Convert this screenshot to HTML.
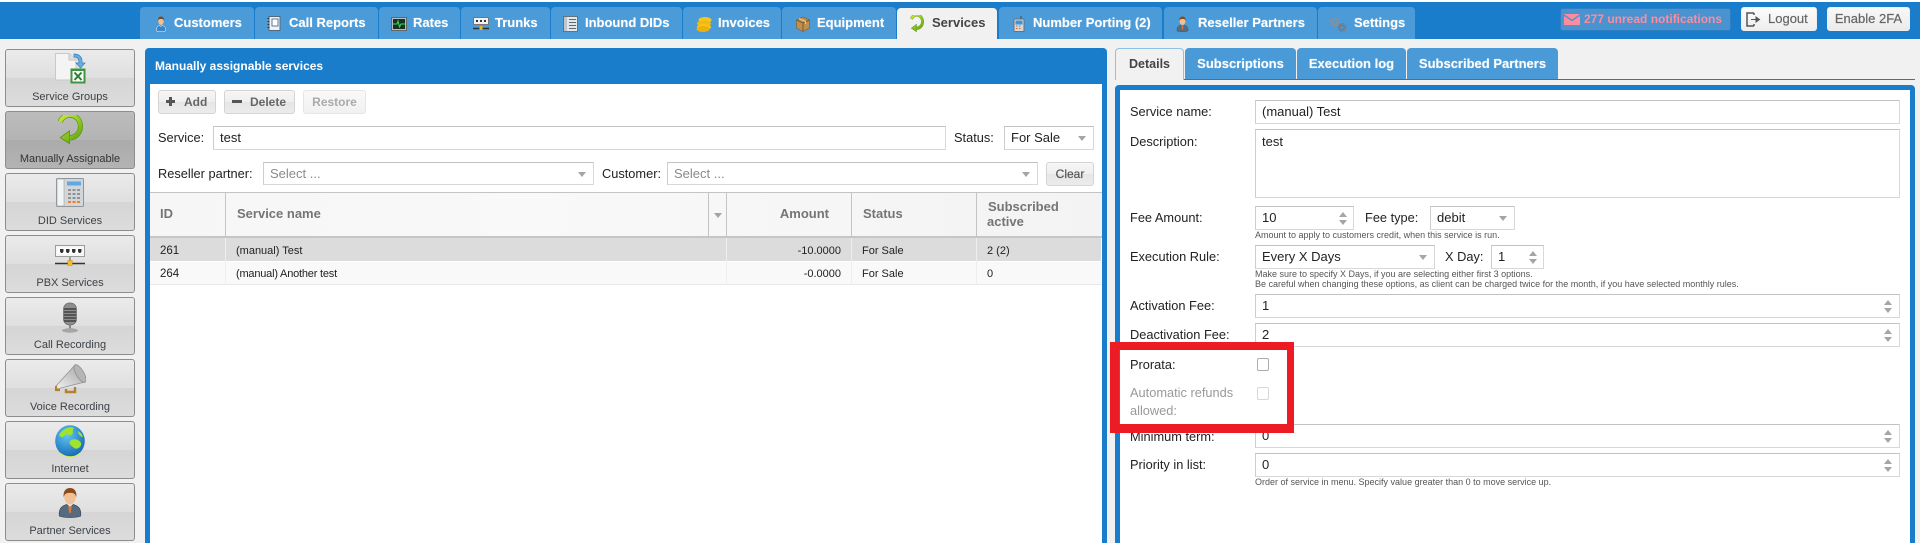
<!DOCTYPE html>
<html><head><meta charset="utf-8"><title>Services</title>
<style>
*{box-sizing:border-box}
html,body{margin:0;padding:0}
body{width:1920px;height:543px;overflow:hidden;background:#f1f1f1;position:relative;font-family:"Liberation Sans",Arial,sans-serif;font-size:12px;color:#222}
.a,.t,.tab,.sb,.inp,.btn,.rt,svg.i{position:absolute}
.t{white-space:nowrap;line-height:16px;height:16px}
.rt{background:#4a9ad8;border-radius:4px 4px 0 0;color:#fff;font-weight:bold;font-size:13px;line-height:32px;white-space:nowrap;text-shadow:0 0 1px rgba(255,255,255,.5)}
.tab{top:7px;height:32px;background:#4b9bd9;border-radius:4px 4px 0 0;color:#fff;font-weight:bold;font-size:13px;line-height:32px;white-space:nowrap;text-shadow:0 0 1px rgba(255,255,255,.5)}
.tab span{position:absolute;top:0}
.sb{left:5px;width:130px;height:58px;border:1px solid #8d8d8d;border-radius:3px;background:linear-gradient(#ebebeb 0,#dfdfdf 50%,#d5d5d5 50%,#dcdcdc 100%);text-align:center;font-size:11px;color:#3c4146;line-height:14px;padding-top:40px}
.sb.on{background:linear-gradient(#bcbcbc 0,#b4b4b4 50%,#ababab 50%,#b3b3b3 100%);color:#333}
.inp{border:1px solid #d8d8d8;border-top-color:#c2c2c2;border-left-color:#cdcdcd;background:#fff;line-height:22px;padding-left:6px;font-size:13px;color:#222;white-space:nowrap}
.btn{border:1px solid #d4d4d4;border-radius:3px;background:linear-gradient(#f6f6f6 0,#efefef 50%,#e5e5e5 50%,#ececec 100%);font-weight:bold;color:#666;font-size:12px;line-height:22px;text-align:center;white-space:nowrap}
.tr{width:0;height:0;position:absolute;border-left:4px solid transparent;border-right:4px solid transparent}
.dn{border-top:5px solid #a5a5a5}
.up{border-bottom:5px solid #a5a5a5}
.th{font-weight:bold;color:#757575;font-size:13px}
.c{font-size:11px;color:#222}
.h{font-size:9px;color:#555}
.l{font-size:12.800px;color:#222}
</style></head><body>
<svg width="0" height="0" style="position:absolute">
<defs>
<linearGradient id="gr" gradientUnits="userSpaceOnUse" x1="4" y1="2" x2="28" y2="30"><stop offset="0" stop-color="#c8e63c"/><stop offset="1" stop-color="#5aa510"/></linearGradient>
<radialGradient id="gl" cx=".4" cy=".3" r=".8"><stop offset="0" stop-color="#63c8f4"/><stop offset="1" stop-color="#0c5fae"/></radialGradient>
<linearGradient id="mg" x1="0" y1="1" x2="1" y2="0"><stop offset="0" stop-color="#f2f2f2"/><stop offset="1" stop-color="#a0a0a0"/></linearGradient>
<symbol id="arrow" viewBox="0 0 32 32"><path d="M5 7.500A12.500 12.500 0 1 1 16 25" fill="none" stroke="#5c950f" stroke-width="6"/><path d="M16 17.500L5 25L16 31.500Z" fill="url(#gr)" stroke="#5c950f" stroke-width="1"/><path d="M5 7.500A12.500 12.500 0 1 1 16 25" fill="none" stroke="url(#gr)" stroke-width="4.500"/></symbol>
<symbol id="person" viewBox="0 0 24 32"><path d="M1 30C0 22 4 19.500 8.500 18L12 21L15.500 18C20 19.500 24 22 23 30C18 32 6 32 1 30Z" fill="#566b80" stroke="#3c4a58" stroke-width=".7"/><path d="M10 19L12 21L14 19L12.800 27H11.200Z" fill="#e8762d"/><ellipse cx="12" cy="10" rx="6" ry="8" fill="#efc197"/><path d="M5.500 11C4.500 4 8 1 12 1C16 1 19.500 4 18.500 11C18 6.500 15 6 12 6C9 6 6 6.500 5.500 11Z" fill="#8c4c1a"/></symbol>
<symbol id="cust" viewBox="0 0 24 32"><path d="M3 30C2 23 5 20 9 19L12 21L15 19C19 20 22 23 21 30C17 32 7 32 3 30Z" fill="#3d85c7" stroke="#fff" stroke-width="1"/><ellipse cx="12" cy="10" rx="5.500" ry="8" fill="#efc197"/><path d="M6 11C5 4 8 1 12 1C16 1 19 4 18 11C18 6.500 15 6 12 6C9 6 6 6.500 6 11Z" fill="#7e4a1c"/></symbol>
</defs></svg>

<div class="a" style="left:0;top:0;width:1920px;height:2px;background:#fff"></div>
<div class="a" style="left:0;top:2px;width:1920px;height:37px;background:#197dcb"></div>

<!-- top tabs -->
<div class="tab" style="left:140px;width:114px"><svg class="i" style="left:15px;top:9px" width="12" height="16" viewBox="0 0 24 32"><use href="#cust"/></svg><span style="left:34px">Customers</span></div>
<div class="tab" style="left:255px;width:123px"><svg class="i" style="left:12px;top:9px" width="14" height="15" viewBox="0 0 14 15"><rect x="2" y=".5" width="11" height="14" fill="#eef3f7" stroke="#55687a"/><rect x="5" y="3" width="6" height="7" fill="#fff" stroke="#5c7b96"/><path d="M.5 2.500h2M.5 5.500h2M.5 8.500h2M.5 11.500h2" stroke="#333"/></svg><span style="left:34px">Call Reports</span></div>
<div class="tab" style="left:379px;width:81px"><svg class="i" style="left:12px;top:10px" width="16" height="14" viewBox="0 0 16 14"><rect x=".5" y=".5" width="15" height="13" fill="#b9bdc0" stroke="#666"/><rect x="2" y="2" width="12" height="10" fill="#143325"/><path d="M2 7H6L7 4L8.500 10L10 7H14" stroke="#3fdc5a" fill="none"/></svg><span style="left:34px">Rates</span></div>
<div class="tab" style="left:461px;width:89px"><svg class="i" style="left:12px;top:10px" width="16" height="14" viewBox="0 0 16 14"><rect x=".5" y=".5" width="15" height="7" fill="#f2f2f2" stroke="#777"/><path d="M3 3h2v2H3zM7 3h2v2H7zM11 3h2v2h-2z" fill="#333"/><path d="M0 11.500H16" stroke="#333" stroke-width="1.500"/><rect x="6.500" y="9" width="3" height="4" fill="#e8b32e"/></svg><span style="left:34px">Trunks</span></div>
<div class="tab" style="left:551px;width:131px"><svg class="i" style="left:12px;top:9px" width="15" height="16" viewBox="0 0 15 16"><rect x=".5" y=".5" width="14" height="15" fill="#e4e7e9" stroke="#66727c"/><rect x="1" y="1" width="3" height="14" fill="#bfc5ca"/><path d="M6 3.500h7M6 6.500h7M6 9.500h7M6 12.500h7" stroke="#5f6a72"/></svg><span style="left:34px">Inbound DIDs</span></div>
<div class="tab" style="left:683px;width:98px"><svg class="i" style="left:13px;top:10px" width="16" height="15" viewBox="0 0 16 15"><ellipse cx="9" cy="3" rx="6.500" ry="3" fill="#f7c521"/><ellipse cx="8" cy="6.500" rx="7" ry="3" fill="#f2b90f"/><ellipse cx="8" cy="10" rx="7" ry="3" fill="#f7c521"/><ellipse cx="7" cy="12" rx="6.500" ry="3" fill="#edb00c"/></svg><span style="left:35px">Invoices</span></div>
<div class="tab" style="left:782px;width:114px"><svg class="i" style="left:14px;top:9px" width="14" height="16" viewBox="0 0 14 16"><path d="M7 1L13.500 4V12L7 15.500L.5 12V4Z" fill="#c08f50" stroke="#8a6230" stroke-width=".7"/><path d="M.5 4L7 7L13.500 4M7 7V15.500" stroke="#7d5828" fill="none"/><path d="M3 2.500L9.500 5.500V8" stroke="#e8cf9d" fill="none"/></svg><span style="left:35px">Equipment</span></div>
<div class="tab" style="left:897px;width:100px;top:8px;height:31px;background:#f1f1f1;color:#444;text-shadow:none;line-height:30px"><svg class="i" style="left:12px;top:7px" width="15" height="17" viewBox="0 0 32 32" preserveAspectRatio="none"><use href="#arrow"/></svg><span style="left:35px">Services</span></div>
<div class="tab" style="left:999px;width:163px"><svg class="i" style="left:14px;top:9px" width="12" height="16" viewBox="0 0 12 16"><rect x="1" y="3" width="10" height="12.500" rx="1" fill="#d4d8db" stroke="#6b7276"/><path d="M8 0V3" stroke="#555" stroke-width="1.200"/><rect x="2.500" y="4.500" width="7" height="4" fill="#3f93d6"/><path d="M3 10h1.500M6 10h1.500M3 12.500h1.500M6 12.500h1.500" stroke="#d6662b"/></svg><span style="left:34px">Number Porting (2)</span></div>
<div class="tab" style="left:1164px;width:153px"><svg class="i" style="left:12px;top:9px" width="13" height="16" viewBox="0 0 24 32"><use href="#person"/></svg><span style="left:34px">Reseller Partners</span></div>
<div class="tab" style="left:1318px;width:97px"><svg class="i" style="left:12px;top:10px" width="17" height="15" viewBox="0 0 17 15"><circle cx="5" cy="5" r="4.200" fill="none" stroke="#8a9096" stroke-width="1.600" stroke-dasharray="1.700 1.600"/><circle cx="5" cy="5" r="2.500" fill="none" stroke="#8a9096" stroke-width="1.600"/><circle cx="12" cy="10.500" r="3.800" fill="none" stroke="#75797e" stroke-width="1.600" stroke-dasharray="1.600 1.400"/><circle cx="12" cy="10.500" r="2.200" fill="none" stroke="#75797e" stroke-width="1.500"/></svg><span style="left:36px">Settings</span></div>

<!-- notifications -->
<div class="a" style="left:1560px;top:8px;width:171px;height:23px;background:#4a93d1;border:1px solid #2e80c5;border-radius:3px;color:#ff8b9c;font-weight:bold;font-size:12px;line-height:21px;white-space:nowrap;padding-left:23px">277 unread notifications</div>
<svg class="i" style="left:1564px;top:14px" width="16" height="11" viewBox="0 0 16 11"><rect width="16" height="11" fill="#ff8b9c"/><path d="M0 1L8 6.500L16 1" stroke="#4a93d1" stroke-width="1.400" fill="none"/></svg>
<div class="btn" style="left:1741px;top:7px;width:76px;height:24px;border-color:#eee;background:linear-gradient(#fcfcfc,#eee);padding-left:26px;text-align:left;color:#666;font-weight:normal;font-size:13px;-webkit-text-stroke:.2px #666">Logout</div>
<svg class="i" style="left:1746px;top:12px" width="15" height="15" viewBox="0 0 15 15"><path d="M8 1H1V14H8M8 1V3M8 14V12" stroke="#555" stroke-width="1.500" fill="none"/><path d="M5 7.500H10M10 5L13.500 7.500L10 10Z" stroke="#555" fill="#555"/></svg>
<div class="btn" style="left:1827px;top:7px;width:83px;height:24px;border-color:#eee;background:linear-gradient(#f8f8f8,#ebebeb);color:#666;font-weight:normal;font-size:13px;-webkit-text-stroke:.2px #666">Enable 2FA</div>

<!-- sidebar -->
<div class="sb" style="top:49px">Service Groups</div>
<div class="sb on" style="top:111px">Manually Assignable</div>
<div class="sb" style="top:173px">DID Services</div>
<div class="sb" style="top:235px">PBX Services</div>
<div class="sb" style="top:297px">Call Recording</div>
<div class="sb" style="top:359px">Voice Recording</div>
<div class="sb" style="top:421px">Internet</div>
<div class="sb" style="top:483px">Partner Services</div>

<svg class="i" style="left:55px;top:53px" width="31" height="31" viewBox="0 0 31 31"><path d="M.5 .5H14L21 7V27H.5Z" fill="#f4f4f4" stroke="#c9c9c9"/><path d="M14 .5V7H21" fill="#dedede" stroke="#c4c4c4"/><path d="M19 1C24 1 27 4 27 8V10H30L25.500 15L21 10H24C24 6 22 4 19 4Z" fill="#6aaee0" stroke="#2f7fbe" stroke-width=".7"/><rect x="15.500" y="15.500" width="15" height="15" fill="#3f9440"/><rect x="17.500" y="18" width="11" height="10.500" fill="#fff"/><path d="M19.500 19.500L26.500 27M26.500 19.500L19.500 27" stroke="#2c7d2e" stroke-width="2"/></svg>
<svg class="i" style="left:56px;top:115px" width="27" height="29" viewBox="0 0 32 32" preserveAspectRatio="none"><use href="#arrow"/></svg>
<svg class="i" style="left:56px;top:178px" width="28" height="29" viewBox="0 0 28 29"><rect x=".5" y=".5" width="27" height="28" rx="1" fill="#d2d6d8" stroke="#8f9598"/><rect x="1" y="1" width="7" height="27" fill="#f2f3f3" stroke="#9ba0a3" stroke-width=".6"/><rect x="11" y="3.500" width="14" height="4" fill="#5fa8e4"/><g fill="#8d9499"><rect x="12" y="11" width="3" height="2"/><rect x="16.500" y="11" width="3" height="2"/><rect x="21" y="11" width="3" height="2"/><rect x="12" y="15" width="3" height="2"/><rect x="16.500" y="15" width="3" height="2"/><rect x="21" y="15" width="3" height="2"/><rect x="12" y="19" width="3" height="2"/><rect x="16.500" y="19" width="3" height="2"/><rect x="21" y="19" width="3" height="2"/></g><g fill="#f07f27"><rect x="12" y="23" width="3" height="2"/><rect x="16.500" y="23" width="3" height="2"/><rect x="21" y="23" width="3" height="2"/></g></svg>
<svg class="i" style="left:55px;top:245px" width="30" height="21" viewBox="0 0 30 21"><rect x=".5" y=".5" width="29" height="11" fill="#f6f6f6" stroke="#9c9c9c"/><rect x="3" y="3" width="24" height="6" fill="#fff"/><path d="M5 4h3.500v2.500l-1 1.500h-1.500l-1-1.500zM11 4h3.500v2.500l-1 1.500h-1.500l-1-1.500zM17 4h3.500v2.500l-1 1.500h-1.500l-1-1.500zM23 4h3.500v2.500l-1 1.500h-1.500l-1-1.500z" fill="#333"/><path d="M0 18.500H30" stroke="#333" stroke-width="1.600"/><path d="M15 12V16" stroke="#555"/><rect x="12.800" y="15.500" width="4.400" height="5" fill="#f5bd21" stroke="#c48e0f" stroke-width=".5"/></svg>
<svg class="i" style="left:60px;top:302px" width="20" height="31" viewBox="0 0 20 31"><rect x="3.500" y="1" width="13" height="22" rx="6" fill="#8e8e8e" stroke="#666" stroke-width=".7"/><path d="M4 7H16M4 10H16M4 13H16M4 16H16M4 19H16" stroke="#333" stroke-width="1.200"/><path d="M10 23V27" stroke="#888" stroke-width="2"/><ellipse cx="10" cy="28.500" rx="8" ry="2.200" fill="#a5a5a5"/></svg>
<svg class="i" style="left:55px;top:364px" width="31" height="33" viewBox="0 0 31 33"><path d="M1 22L20 1L30 18L2 25Z" fill="url(#mg)" stroke="#8e8e8e" stroke-width=".7"/><ellipse cx="25" cy="9.500" rx="3.800" ry="10" transform="rotate(-30 25 9.500)" fill="#b5b5b5" stroke="#8a8a8a" stroke-width=".7"/><path d="M1 22V26L5 26" stroke="#b78128" stroke-width="2.200" fill="none"/><path d="M11 25V28H20V23" stroke="#b78128" stroke-width="2.400" fill="none"/></svg>
<svg class="i" style="left:55px;top:425px" width="30" height="32" viewBox="0 0 30 32"><ellipse cx="15" cy="16" rx="14.800" ry="15.800" fill="url(#gl)"/><path d="M4 10C8 3 16 1 19 3C16 6 20 8 16 10C14 11 13 8 10 10C8 12 7 14 4 10ZM15 16C18 13 24 14 26 18C27 22 22 25 19 23C17 21 13 19 15 16ZM23 6C25 7 27 9 28 12C26 12 23 10 23 6Z" fill="#9fe32d"/><path d="M5 28C11 33 20 33 25 28" stroke="#d4ef48" stroke-width="1" fill="none"/></svg>
<svg class="i" style="left:58px;top:487px" width="24" height="31" viewBox="0 0 24 32"><use href="#person"/></svg>

<!-- left panel -->
<div class="a" style="left:145px;top:48px;width:962px;height:495px;background:#197dcb;border-radius:4px 4px 0 0"></div>
<div class="a" style="left:150px;top:84px;width:952px;height:459px;background:#fff"></div>
<div class="t" style="left:155px;top:58px;color:#fff;font-weight:bold;font-size:12px">Manually assignable services</div>

<div class="btn" style="left:158px;top:90px;width:58px;height:24px;text-align:left;padding-left:25px">Add</div>
<div class="a" style="left:166px;top:100px;width:9px;height:3px;background:#555"></div>
<div class="a" style="left:169px;top:97px;width:3px;height:9px;background:#555"></div>
<div class="btn" style="left:224px;top:90px;width:71px;height:24px;text-align:left;padding-left:25px">Delete</div>
<div class="a" style="left:232px;top:100px;width:10px;height:3px;background:#555"></div>
<div class="btn" style="left:303px;top:90px;width:63px;height:24px;color:#aaa;border-color:#e6e6e6;background:linear-gradient(#f9f9f9,#f1f1f1)">Restore</div>

<div class="t l" style="left:158px;top:130px">Service:</div>
<div class="inp" style="left:213px;top:126px;width:733px;height:24px">test</div>
<div class="t l" style="left:954px;top:130px">Status:</div>
<div class="inp" style="left:1004px;top:126px;width:90px;height:24px">For Sale</div>
<div class="tr dn" style="left:1078px;top:136px"></div>

<div class="t l" style="left:158px;top:166px">Reseller partner:</div>
<div class="inp" style="left:263px;top:162px;width:331px;height:23px;color:#8a8a8a">Select ...</div>
<div class="tr dn" style="left:578px;top:172px"></div>
<div class="t l" style="left:602px;top:166px">Customer:</div>
<div class="inp" style="left:667px;top:162px;width:371px;height:23px;color:#8a8a8a">Select ...</div>
<div class="tr dn" style="left:1022px;top:172px"></div>
<div class="btn" style="left:1046px;top:162px;width:48px;height:24px;font-weight:normal;color:#555;-webkit-text-stroke:.2px #555">Clear</div>

<!-- table -->
<div class="a" style="left:150px;top:192px;width:952px;height:46px;background:linear-gradient(90deg,#f6f6f6,#f9f9f9 40%,#f3f3f3);border-top:1px solid #c4c4c4;border-bottom:2px solid #c6c6c6"></div>
<div class="a" style="left:225px;top:192px;width:1px;height:46px;background:#c4c4c4"></div>
<div class="a" style="left:708px;top:192px;width:1px;height:46px;background:#c4c4c4"></div>
<div class="a" style="left:726px;top:192px;width:1px;height:46px;background:#c4c4c4"></div>
<div class="a" style="left:851px;top:192px;width:1px;height:46px;background:#c4c4c4"></div>
<div class="a" style="left:976px;top:192px;width:1px;height:46px;background:#c4c4c4"></div>
<div class="t th" style="left:160px;top:206px">ID</div>
<div class="t th" style="left:237px;top:206px">Service name</div>
<div class="tr dn" style="left:714px;top:213px"></div>
<div class="t th" style="left:769px;top:206px;width:60px;text-align:right">Amount</div>
<div class="t th" style="left:863px;top:206px">Status</div>
<div class="t th" style="left:988px;top:199px">Subscribed</div>
<div class="t th" style="left:987px;top:214px">active</div>

<div class="a" style="left:150px;top:238px;width:951px;height:23px;background:#dcdcdc"></div>
<div class="a" style="left:150px;top:262px;width:952px;height:23px;background:#f9f9f9;border-bottom:1px solid #e8e8e8"></div>
<div class="a" style="left:225px;top:238px;width:1px;height:47px;background:#eee"></div>
<div class="a" style="left:726px;top:238px;width:1px;height:47px;background:#eee"></div>
<div class="a" style="left:851px;top:238px;width:1px;height:47px;background:#eee"></div>
<div class="a" style="left:976px;top:238px;width:1px;height:47px;background:#eee"></div>
<div class="t c" style="left:160px;top:243px;font-size:11.500px">261</div>
<div class="t c" style="left:236px;top:243px">(manual) Test</div>
<div class="t c" style="left:781px;top:243px;width:60px;text-align:right">-10.0000</div>
<div class="t c" style="left:862px;top:243px">For Sale</div>
<div class="t c" style="left:987px;top:243px">2 (2)</div>
<div class="t c" style="left:160px;top:266px;font-size:11.500px">264</div>
<div class="t c" style="left:236px;top:266px;letter-spacing:-.2px">(manual) Another test</div>
<div class="t c" style="left:781px;top:266px;width:60px;text-align:right">-0.0000</div>
<div class="t c" style="left:862px;top:266px">For Sale</div>
<div class="t c" style="left:987px;top:266px">0</div>

<!-- right tabs -->
<div class="a" style="left:1115px;top:79px;width:800px;height:1px;background:#197dcb"></div>
<div class="rt" style="left:1115px;top:48px;width:69px;height:32px;background:#f1f1f1;color:#444;text-shadow:none;border:1px solid #8fc0e6;border-bottom:0;text-align:center;line-height:31px;font-size:12.500px">Details</div>
<div class="rt" style="left:1185px;top:48px;width:111px;height:31px;text-align:center;line-height:31px">Subscriptions</div>
<div class="rt" style="left:1297px;top:48px;width:109px;height:31px;text-align:center;line-height:31px">Execution log</div>
<div class="rt" style="left:1407px;top:48px;width:151px;height:31px;text-align:center;line-height:31px">Subscribed Partners</div>

<!-- right panel -->
<div class="a" style="left:1115px;top:85px;width:800px;height:458px;background:#197dcb;border-radius:4px 4px 0 0"></div>
<div class="a" style="left:1120px;top:90px;width:790px;height:453px;background:#fff"></div>

<div class="t l" style="left:1130px;top:104px">Service name:</div>
<div class="inp" style="left:1255px;top:100px;width:645px;height:24px">(manual) Test</div>
<div class="t l" style="left:1130px;top:134px">Description:</div>
<div class="inp" style="left:1255px;top:129px;width:645px;height:69px;line-height:24px">test</div>

<div class="t l" style="left:1130px;top:210px">Fee Amount:</div>
<div class="inp" style="left:1255px;top:206px;width:99px;height:24px">10</div>
<div class="tr up" style="left:1339px;top:212px"></div><div class="tr dn" style="left:1339px;top:220px"></div>
<div class="t l" style="left:1365px;top:210px">Fee type:</div>
<div class="inp" style="left:1430px;top:206px;width:85px;height:24px">debit</div>
<div class="tr dn" style="left:1499px;top:216px"></div>
<div class="t h" style="left:1255px;top:227px">Amount to apply to customers credit, when this service is run.</div>

<div class="t l" style="left:1130px;top:249px">Execution Rule:</div>
<div class="inp" style="left:1255px;top:245px;width:180px;height:24px">Every X Days</div>
<div class="tr dn" style="left:1419px;top:255px"></div>
<div class="t l" style="left:1445px;top:249px">X Day:</div>
<div class="inp" style="left:1491px;top:245px;width:53px;height:24px">1</div>
<div class="tr up" style="left:1529px;top:251px"></div><div class="tr dn" style="left:1529px;top:259px"></div>
<div class="t h" style="left:1255px;top:266px">Make sure to specify X Days, if you are selecting either first 3 options.</div>
<div class="t h" style="left:1255px;top:276px">Be careful when changing these options, as client can be charged twice for the month, if you have selected monthly rules.</div>

<div class="t l" style="left:1130px;top:298px">Activation Fee:</div>
<div class="inp" style="left:1255px;top:294px;width:645px;height:24px">1</div>
<div class="tr up" style="left:1884px;top:300px"></div><div class="tr dn" style="left:1884px;top:308px"></div>
<div class="t l" style="left:1130px;top:327px">Deactivation Fee:</div>
<div class="inp" style="left:1255px;top:323px;width:645px;height:24px">2</div>
<div class="tr up" style="left:1884px;top:329px"></div><div class="tr dn" style="left:1884px;top:337px"></div>

<div class="t l" style="left:1130px;top:357px">Prorata:</div>
<div class="a" style="left:1257px;top:358px;width:12px;height:13px;border:1px solid #adadad;border-radius:2px;background:#fff"></div>
<div class="t l" style="left:1130px;top:385px;color:#999">Automatic refunds</div>
<div class="t l" style="left:1130px;top:403px;color:#999">allowed:</div>
<div class="a" style="left:1257px;top:387px;width:12px;height:13px;border:1px solid #d8d8d8;border-radius:2px;background:#fff"></div>

<div class="t l" style="left:1130px;top:429px">Minimum term:</div>
<div class="inp" style="left:1255px;top:424px;width:645px;height:24px">0</div>
<div class="tr up" style="left:1884px;top:430px"></div><div class="tr dn" style="left:1884px;top:438px"></div>
<div class="t l" style="left:1130px;top:457px">Priority in list:</div>
<div class="inp" style="left:1255px;top:453px;width:645px;height:24px">0</div>
<div class="tr up" style="left:1884px;top:459px"></div><div class="tr dn" style="left:1884px;top:467px"></div>
<div class="t h" style="left:1255px;top:474px">Order of service in menu. Specify value greater than 0 to move service up.</div>

<!-- red annotation -->
<div class="a" style="left:1110px;top:342px;width:184px;height:91px;border:solid #ed1c24;border-width:8px 7px 9px 9px"></div>
</body></html>
